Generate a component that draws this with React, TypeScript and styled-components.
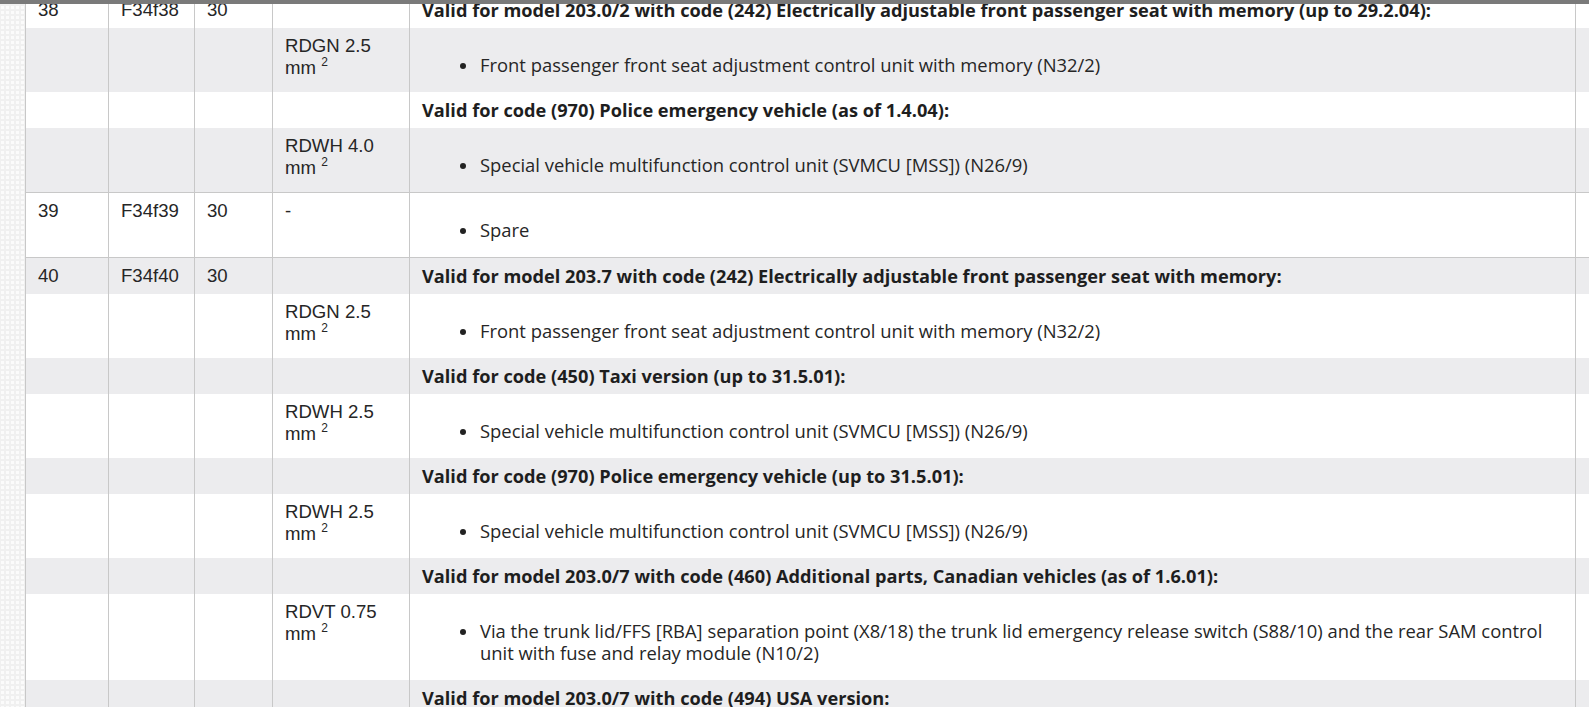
import React from "react";
import styled, { createGlobalStyle } from "styled-components";

const GlobalStyle = createGlobalStyle`
  html, body {
    margin: 0;
    padding: 0;
  }
  body {
    overflow: hidden;
    background-color: #f0f0f0;
    background-image: radial-gradient(circle, #fbfbfb 45%, transparent 48%);
    background-size: 5px 5px;
    color: #222;
  }
`;

const TopBar = styled.div`
  position: fixed;
  top: 0;
  left: 0;
  right: 0;
  height: 4px;
  background: #7a7a7a;
  z-index: 2;
`;

const Page = styled.div`
  height: 100vh;
  overflow: hidden;
  padding-left: 25px;
`;

// page is scrolled a few pixels into the first fuse row
const Table = styled.div`
  margin-top: -9px;
  background: #fff;
`;

const Group = styled.div`
  border-top: 1px solid #c8c8c8;
`;

const Row = styled.div<{ $striped: boolean }>`
  display: grid;
  grid-template-columns: 83px 86px 78px 137px 1166px 1fr;
  background: ${(p) => (p.$striped ? "#ececee" : "#fff")};
`;

const Cell = styled.div`
  box-sizing: border-box;
  min-width: 0;
  border-left: 1px solid #c8c8c8;
  padding: 7px 12px;
  font-family: "Liberation Sans", Arial, sans-serif;
  font-size: 18.6px;
  line-height: 22px;
  color: #262626;
`;

const TextCell = styled(Cell)`
  padding-right: 20px;
  font-family: "Open Sans", "Noto Sans", sans-serif;
  font-size: 18.4px;
`;

const Heading = styled.div`
  font-weight: 700;
  font-size: 18.2px;
  color: #1e1e1e;
`;

const List = styled.ul`
  margin: 19px 0 9px;
  padding-left: 38px;
  list-style: none;
`;

const Item = styled.li`
  display: flex;
  &::before {
    content: "";
    flex: none;
    width: 6px;
    height: 6px;
    margin: 9px 14px 0 0;
    border-radius: 50%;
    background: #222;
  }
`;

const Sup = styled.sup`
  font-size: 12px;
  line-height: 0;
  vertical-align: 8px;
`;

type Line =
  | { kind: "head"; text: string }
  | { kind: "item"; wire: string; text: string; plain?: boolean };

type Fuse = { no: string; fuse: string; amp: string; lines: Line[] };

const seatText = "Front passenger front seat adjustment control unit with memory (N32/2)";
const svmcuText = "Special vehicle multifunction control unit (SVMCU [MSS]) (N26/9)";

const fuses: Fuse[] = [
  {
    no: "38",
    fuse: "F34f38",
    amp: "30",
    lines: [
      {
        kind: "head",
        text: "Valid for model 203.0/2 with code (242) Electrically adjustable front passenger seat with memory (up to 29.2.04):",
      },
      { kind: "item", wire: "RDGN 2.5", text: seatText },
      { kind: "head", text: "Valid for code (970) Police emergency vehicle (as of 1.4.04):" },
      { kind: "item", wire: "RDWH 4.0", text: svmcuText },
    ],
  },
  {
    no: "39",
    fuse: "F34f39",
    amp: "30",
    lines: [{ kind: "item", wire: "-", text: "Spare", plain: true }],
  },
  {
    no: "40",
    fuse: "F34f40",
    amp: "30",
    lines: [
      {
        kind: "head",
        text: "Valid for model 203.7 with code (242) Electrically adjustable front passenger seat with memory:",
      },
      { kind: "item", wire: "RDGN 2.5", text: seatText },
      { kind: "head", text: "Valid for code (450) Taxi version (up to 31.5.01):" },
      { kind: "item", wire: "RDWH 2.5", text: svmcuText },
      { kind: "head", text: "Valid for code (970) Police emergency vehicle (up to 31.5.01):" },
      { kind: "item", wire: "RDWH 2.5", text: svmcuText },
      {
        kind: "head",
        text: "Valid for model 203.0/7 with code (460) Additional parts, Canadian vehicles (as of 1.6.01):",
      },
      {
        kind: "item",
        wire: "RDVT 0.75",
        text: "Via the trunk lid/FFS [RBA] separation point (X8/18) the trunk lid emergency release switch (S88/10) and the rear SAM control unit with fuse and relay module (N10/2)",
      },
      { kind: "head", text: "Valid for model 203.0/7 with code (494) USA version:" },
    ],
  },
];

const Wire = ({ line }: { line: Line }) => {
  if (line.kind !== "item") return null;
  if (line.plain) return <>{line.wire}</>;
  return (
    <>
      {line.wire} mm <Sup>2</Sup>
    </>
  );
};

export default function App() {
  let stripe = 0;

  return (
    <>
      <GlobalStyle />
      <TopBar />
      <Page>
        <Table>
          {fuses.map((f) => (
            <Group key={f.no}>
              {f.lines.map((line, i) => {
                const striped = stripe++ % 2 === 1;
                return (
                  <Row key={i} $striped={striped}>
                    <Cell>{i === 0 ? f.no : ""}</Cell>
                    <Cell>{i === 0 ? f.fuse : ""}</Cell>
                    <Cell>{i === 0 ? f.amp : ""}</Cell>
                    <Cell>
                      <Wire line={line} />
                    </Cell>
                    <TextCell>
                      {line.kind === "head" ? (
                        <Heading>{line.text}</Heading>
                      ) : (
                        <List>
                          <Item>{line.text}</Item>
                        </List>
                      )}
                    </TextCell>
                    <Cell />
                  </Row>
                );
              })}
            </Group>
          ))}
        </Table>
      </Page>
    </>
  );
}
